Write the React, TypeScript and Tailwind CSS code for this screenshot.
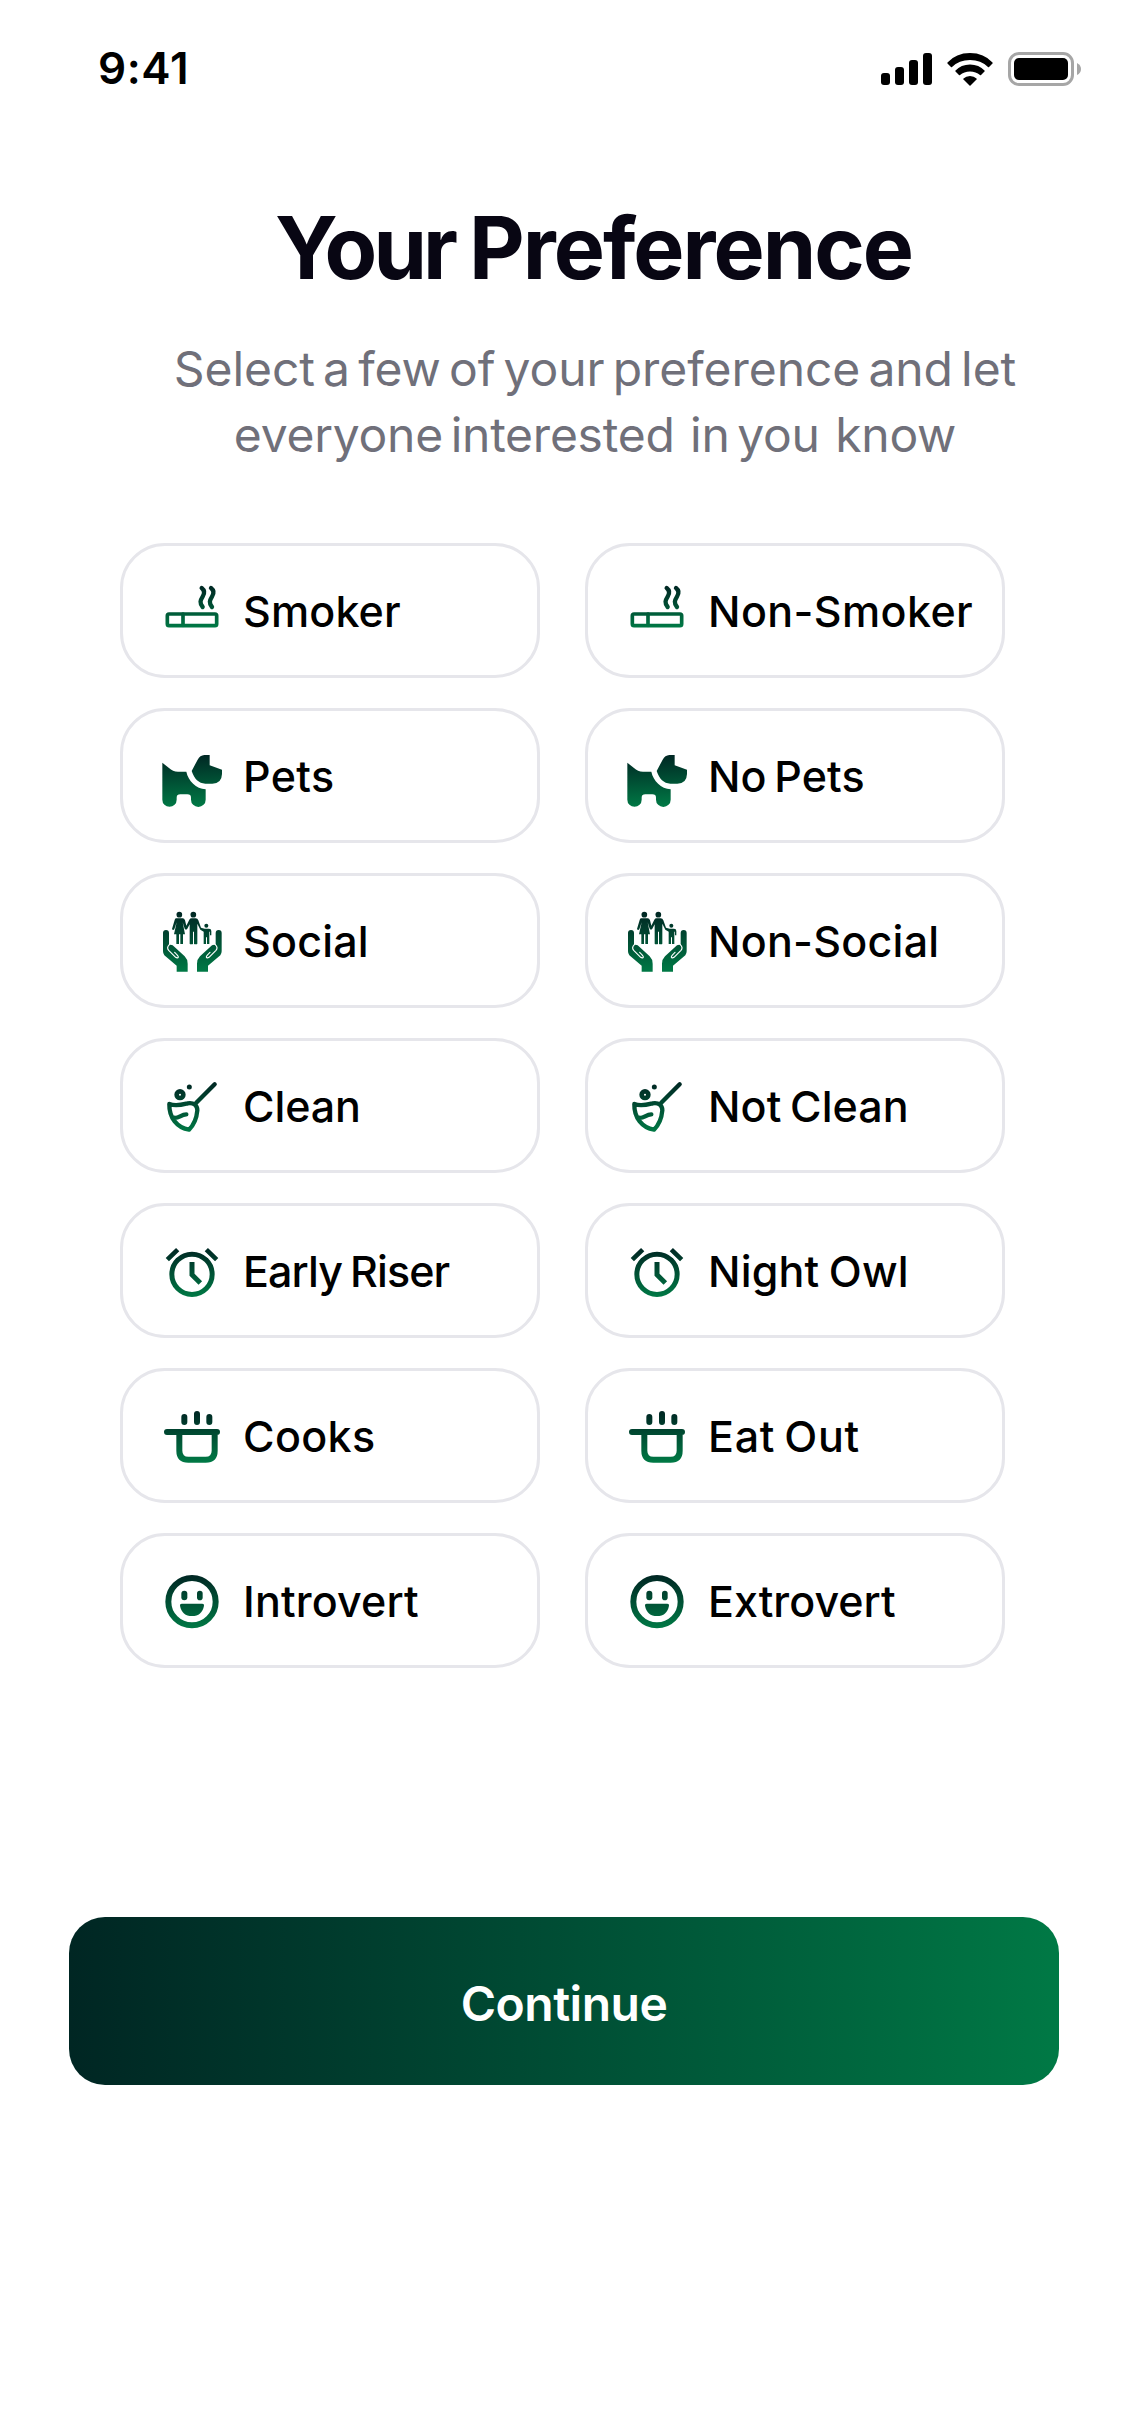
import React from "react";

type IconName = "smoke" | "dog" | "family" | "clean" | "alarm" | "pot" | "smile";

// Vertical extent of each drawing, used to span its gradient.
const extents: Record<IconName, [number, number]> = {
  smoke: [64, 188],
  dog: [75, 230],
  family: [50, 230],
  clean: [68, 216],
  alarm: [68, 216],
  pot: [63, 218],
  smile: [60, 220],
};

function Drawing({ name, paint }: { name: IconName; paint: string }) {
  const line = { stroke: paint, fill: "none" } as const;
  switch (name) {
    case "smoke":
      return (
        <g {...line} strokeWidth="11" strokeLinecap="round" strokeLinejoin="round">
          <rect x="52" y="147" width="148" height="35" rx="5" />
          <path d="M99 147V181" />
          <path d="M155 69c9 7 10 15 3 26s-10 19 0 31M183 69c9 7 10 15 3 26s-10 19 0 31" strokeWidth="13" />
        </g>
      );
    case "dog":
      return (
        <g fill={paint}>
          <path d="M125 123L143 89Q150 76 163 75H179V106L216 119V132Q215 161 187 161H166C146 160 133 147 125 123Z" />
          <path d="M37 98L57 114Q68 125 84 125H109C115 153 138 176 167 178V209A22 22 0 0 1 123 209V203Q123 193 112 193H91Q80 193 80 203V209A21.500 21.500 0 0 1 37 209Z" />
        </g>
      );
    case "family":
      return (
        <g fill={paint}>
          <circle cx="88" cy="59" r="8.500" />
          <path d="M78 70H98Q103 70 105 76L109 92L118 74Q120 70 125 70H137Q143 70 145 76L153 98L164 101H177Q184 101 184 108V121H180V110H178V147H171V127H168V147H161V110L151 104L142 86V146Q142 148 137 148T132 146V110H129V146Q129 148 124 148T119 146V88L112 101Q108 106 104 101L98 82L105 118H99V147H91V118H87V147H79V118H72L80 82L73 103Q69 108 66 102L74 75Q75 70 78 70Z" />
          <circle cx="130" cy="59" r="8.500" />
          <circle cx="169" cy="92" r="6" />
          <path d="M39 114A9 9 0 0 1 57 114V151Q61 147 68 151L104 184Q113 193 113 206V230H80V212L43 181Q39 176 39 169Z" />
          <path d="M215 114A9 9 0 0 0 197 114V151Q193 147 186 151L150 184Q141 193 141 206V230H174V212L211 181Q215 176 215 169Z" />
          <g fill="none" stroke="#fff" strokeWidth="3.5" strokeLinecap="round" strokeLinejoin="round">
            <path d="M58 149Q49 158 56 166L77 187Q83 191 85 186Q85 182 74 172" />
            <path d="M196 149Q205 158 198 166L177 187Q171 191 169 186Q169 182 180 172" />
          </g>
        </g>
      );
    case "clean":
      return (
        <g {...line} strokeWidth="13" strokeLinecap="round" strokeLinejoin="round">
          <path d="M194 73L138 129" />
          <circle cx="90" cy="104" r="10" strokeWidth="14" />
          <circle cx="118" cy="81" r="7.500" fill={paint} stroke="none" />
          <path d="M58 132C78 140 97 134 113 130C131 127 142 136 142 151C140 174 132 194 117 209C82 204 57 174 58 132ZM71 173C86 177 92 163 109 163" />
        </g>
      );
    case "alarm":
      return (
        <g {...line} strokeWidth="15">
          <circle cx="126" cy="148" r="60.500" />
          <path d="M126 111V149L151 174" />
          <path d="M52 104L83 74M169 74L200 104" strokeWidth="14" />
        </g>
      );
    case "pot":
      return (
        <g {...line} strokeWidth="18" strokeLinecap="round">
          <path d="M51 126H201M88 130V182Q88 209 115 209H167Q194 209 194 182V130" />
          <path d="M103 81V96M141 72V96M178 81V96" />
        </g>
      );
    case "smile":
      return (
        <g>
          <circle cx="126" cy="140" r="71" {...line} strokeWidth="18" />
          <g fill={paint}>
            <rect x="94" y="107" width="18" height="29" rx="9" />
            <rect x="141" y="107" width="17" height="29" rx="8.500" />
            <path d="M95 146H157Q163 146 162 152C158 173 146 183 126 183S94 173 90 152Q89 146 95 146Z" />
          </g>
        </g>
      );
  }
}

function Icon({ name, id }: { name: IconName; id: string }) {
  const [top, bottom] = extents[name];
  return (
    <svg viewBox="0 0 270 270" className="-mt-px size-[90px] shrink-0" aria-hidden="true">
      <defs>
        <linearGradient id={id} gradientUnits="userSpaceOnUse" x1="120" y1={top} x2="126" y2={bottom}>
          <stop stopColor="#002623" />
          <stop offset="1" stopColor="#007945" />
        </linearGradient>
      </defs>
      <Drawing name={name} paint={`url(#${id})`} />
    </svg>
  );
}

const options: { icon: IconName; label: string; spacing: string }[] = [
  { icon: "smoke", label: "Smoker", spacing: "tracking-[0.15px]" },
  { icon: "smoke", label: "Non-Smoker", spacing: "tracking-[0.4px]" },
  { icon: "dog", label: "Pets", spacing: "tracking-[0.4px]" },
  { icon: "dog", label: "No Pets", spacing: "tracking-[0.1px] [word-spacing:-4px]" },
  { icon: "family", label: "Social", spacing: "tracking-[0.2px]" },
  { icon: "family", label: "Non-Social", spacing: "tracking-[0.25px]" },
  { icon: "clean", label: "Clean", spacing: "tracking-[-0.1px]" },
  { icon: "clean", label: "Not Clean", spacing: "tracking-[0.1px] [word-spacing:-3px]" },
  { icon: "alarm", label: "Early Riser", spacing: "tracking-[-0.9px] [word-spacing:-2.5px]" },
  { icon: "alarm", label: "Night Owl", spacing: "tracking-[0.15px] [word-spacing:-2px]" },
  { icon: "pot", label: "Cooks", spacing: "tracking-[0.37px]" },
  { icon: "pot", label: "Eat Out", spacing: "tracking-[0.7px] [word-spacing:-3px]" },
  { icon: "smile", label: "Introvert", spacing: "tracking-[0.16px]" },
  { icon: "smile", label: "Extrovert", spacing: "tracking-[0.03px]" },
];

function StatusBar() {
  return (
    <header className="flex h-[136px] items-center justify-between pr-[44px] pl-[98px]">
      <span className="text-[44px] leading-none font-semibold tracking-[0.6px] text-black">9:41</span>
      <div className="mt-0.5 flex items-center">
        <svg width="51" height="32" viewBox="0 0 51 32" className="mr-[15px]">
          <rect y="20" width="9" height="12" rx="3" />
          <rect x="14" y="14" width="9" height="18" rx="3" />
          <rect x="28" y="7" width="9" height="25" rx="3" />
          <rect x="42" width="9" height="32" rx="3" />
        </svg>
        <svg width="46" height="33" viewBox="0 0 46 33" className="mr-[15px]">
          <path d="M0.500 9.500Q9 0 23 0T45.500 9.500Q46 10 45.500 10.500L42 14Q41.500 14.500 41 14Q34 7 23 7T5 14Q4.500 14.500 4 14L0.500 10.500Q0 10 0.500 9.500Z" />
          <path d="M8.500 17.500Q14 11.500 23 11.500T37.500 17.500Q38 18 37.500 18.500L34 22Q33.500 22.500 33 22Q29 18.500 23 18.500T13 22Q12.500 22.500 12 22L8.500 18.500Q8 18 8.500 17.500Z" />
          <path d="M16.500 25.500Q19 23 23 23T29.500 25.500Q30 26 29.500 26.500L23.500 32.500Q23 33 22.500 32.500L16.500 26.500Q16 26 16.500 25.500Z" />
        </svg>
        <svg width="73" height="34" viewBox="0 0 73 34">
          <rect x="1.500" y="1.500" width="63" height="31" rx="9.500" fill="none" stroke="#a6a6a6" strokeWidth="3" />
          <rect x="6" y="6" width="54" height="22" rx="5" />
          <path d="M69 11Q73 13 73 17T69 23Z" fill="#a6a6a6" />
        </svg>
      </div>
    </header>
  );
}

export default function App() {
  return (
    <main className="flex h-[2436px] w-[1125px] flex-col bg-white font-['Inter',sans-serif]">
      <StatusBar />
      <h1 className="mt-[58px] ml-[275px] flex h-[108px] items-center text-[86px] leading-[108px] font-bold whitespace-nowrap text-[#080613]">
        <span className="w-[194px] tracking-[-3.9px]">Your</span>
        <span className="tracking-[-2px]">Preference</span>
      </h1>
      <div className="mt-[34px] ml-[65px] flex flex-col items-center text-[48px] leading-[66px] whitespace-pre text-[#70707a]">
        <p className="tracking-[-0.05px] [word-spacing:-5.3px]">Select a few of your preference and let</p>
        <p className="tracking-[-0.25px] [word-spacing:-5.5px]">everyone interested  in you  know</p>
      </div>
      <div className="mx-[120px] mt-[75px] grid grid-cols-2 gap-x-[45px] gap-y-[30px]">
        {options.map(({ icon, label, spacing }, i) => (
          <button
            key={label}
            type="button"
            className="flex h-[135px] items-center rounded-[45px] border-3 border-[#e6e6eb] pl-[27px] text-[43px] font-medium whitespace-nowrap text-black"
          >
            <Icon name={icon} id={`shade-${i}`} />
            <span className={`mt-0.5 ml-[3px] leading-none ${spacing}`}>{label}</span>
          </button>
        ))}
      </div>
      <button
        type="button"
        className="mt-[249px] ml-[69px] h-[168px] w-[990px] rounded-[36px] bg-linear-to-r from-[#002623] to-[#007945] pt-[6px] text-[48px] leading-none font-semibold tracking-[-0.5px] text-white"
      >
        Continue
      </button>
    </main>
  );
}
